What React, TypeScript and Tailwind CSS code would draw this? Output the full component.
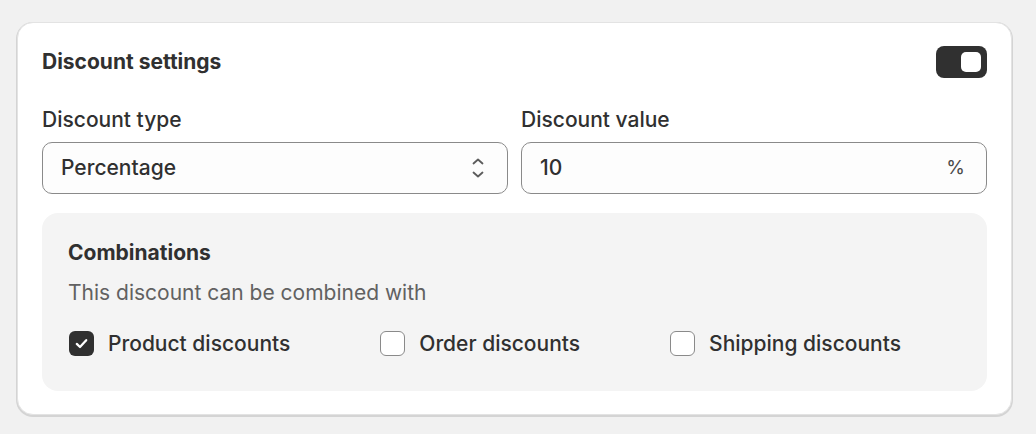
import { useState } from "react";

type Option = { label: string; checked: boolean };

function Checkbox({ checked }: { checked: boolean }) {
    return checked ? (
        <span className="flex h-[25px] w-[25px] items-center justify-center rounded-[6px] bg-[#303030]">
            <svg width="15" height="15" viewBox="0 0 14 14" fill="none">
                <path d="M2.6 7.4 L5.6 10.3 L11.4 3.9" stroke="#fff" strokeWidth="2.1" strokeLinecap="round" strokeLinejoin="round" />
            </svg>
        </span>
    ) : (
        <span className="h-[25px] w-[25px] rounded-[6px] border border-[#8a8a8a] bg-white" />
    );
}

function App() {
    const [enabled, setEnabled] = useState(true);
    const [options, setOptions] = useState<Option[]>([
        { label: "Product discounts", checked: true },
        { label: "Order discounts", checked: false },
        { label: "Shipping discounts", checked: false },
    ]);

    const toggleOption = (i: number) => {
        setOptions(options.map((o, idx) => (idx === i ? { ...o, checked: !o.checked } : o)));
    };

    return (
        <div className="min-h-[434px] bg-[#f1f1f1] px-[17px] pt-[22px] font-['Inter','Noto_Sans',sans-serif] font-[450] text-[#303030]">
            <div className="w-[995px] rounded-[16px] border border-[#e3e3e3] bg-white px-[24px] pt-[23px] pb-[23px] shadow-[0_1px_0_1px_#d4d4d4]">
                {/* header */}
                <div className="flex h-[32px] items-center justify-between">
                    <h2 className="text-[21px] leading-6 font-[650]">Discount settings</h2>
                    <button
                        className="flex h-[32px] w-[51px] items-center justify-end rounded-[8px] bg-[#303030] pr-[6px]"
                        onClick={() => setEnabled(!enabled)}
                    >
                        <span className="h-[20px] w-[20px] rounded-[5px] bg-white" />
                    </button>
                </div>

                {/* fields */}
                <div className="mt-[30px] grid grid-cols-2 gap-x-[13px]">
                    <div>
                        <div className="text-[21px] leading-6">Discount type</div>
                        <div className="mt-[10px] flex h-[52px] items-center justify-between rounded-[10px] border border-[#8a8a8a] bg-[#fdfdfd] pr-[22px] pl-[18px]">
                            <span className="text-[21px]">Percentage</span>
                            <svg width="14" height="22" viewBox="0 0 14 22" fill="none">
                                <path d="M2.5 6.5 L7 2.5 L11.5 6.5" stroke="#5c5c5c" strokeWidth="1.8" strokeLinecap="round" strokeLinejoin="round" />
                                <path d="M2.5 15.5 L7 19.5 L11.5 15.5" stroke="#5c5c5c" strokeWidth="1.8" strokeLinecap="round" strokeLinejoin="round" />
                            </svg>
                        </div>
                    </div>
                    <div>
                        <div className="text-[21px] leading-6">Discount value</div>
                        <div className="mt-[10px] flex h-[52px] items-center justify-between rounded-[10px] border border-[#8a8a8a] bg-[#fdfdfd] pr-[21px] pl-[18px]">
                            <span className="text-[21px]">10</span>
                            <span className="text-[19px] font-normal text-[#4a4a4a]">%</span>
                        </div>
                    </div>
                </div>

                {/* combinations */}
                <div className="mt-[19px] rounded-[16px] bg-[#f4f4f4] pt-[28px] pr-[26px] pb-[35px] pl-[27px]">
                    <h3 className="-ml-px text-[21px] leading-6 font-[650]">Combinations</h3>
                    <p className="mt-[16px] -ml-px text-[21px] leading-6 font-normal text-[#616161]">This discount can be combined with</p>
                    <div className="mt-[26px] flex gap-[90px]">
                        {options.map((o, i) => (
                            <label key={o.label} className="flex cursor-pointer items-center gap-[14px]" onClick={() => toggleOption(i)}>
                                <Checkbox checked={o.checked} />
                                <span className="text-[21px] leading-6">{o.label}</span>
                            </label>
                        ))}
                    </div>
                </div>
            </div>
        </div>
    );
}

export default App;
